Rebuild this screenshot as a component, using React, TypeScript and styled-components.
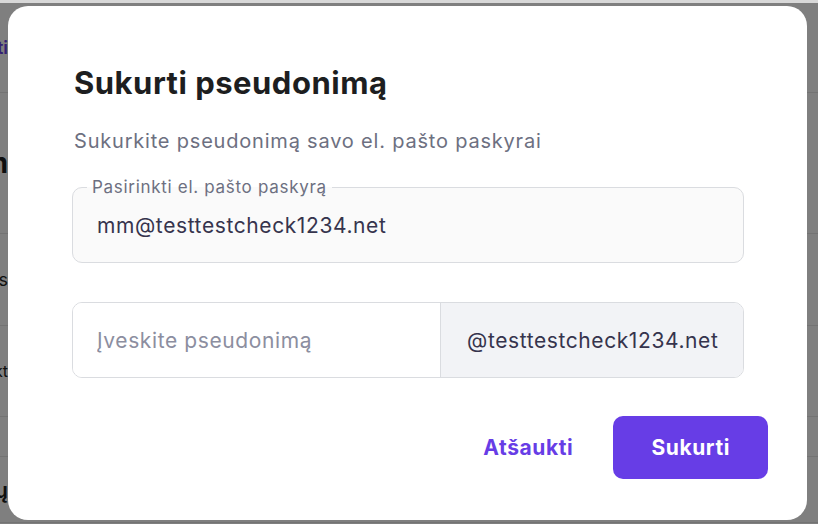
import React, { useState } from "react";
import styled, { createGlobalStyle } from "styled-components";

const GlobalStyle = createGlobalStyle`
  html, body {
    margin: 0;
    padding: 0;
    width: 100%;
    height: 100%;
    overflow: hidden;
  }
  body {
    font-family: "Inter", "Noto Sans", sans-serif;
    background: #ffffff;
  }
  * {
    box-sizing: border-box;
  }
`;

// background page, mostly hidden by the dialog
const Page = styled.div`
  width: 818px;
  height: 524px;
  position: relative;
  background: #ffffff;
  border-top: 3px solid #d8d8d8;
`;

const PageRow = styled.div<{ $height: number }>`
  height: ${({ $height }) => $height}px;
  border-bottom: 1px solid #e6e6e6;
  display: flex;
  align-items: center;
`;

const PageCell = styled.div`
  width: 8px;
  overflow: hidden;
  display: flex;
  justify-content: flex-end;
`;

const PageText = styled.span<{ $color?: string; $size: number; $weight?: number }>`
  white-space: nowrap;
  font-size: ${({ $size }) => $size}px;
  font-weight: ${({ $weight }) => $weight ?? 400};
  color: ${({ $color }) => $color ?? "#1d1e20"};
`;

const Overlay = styled.div`
  position: absolute;
  inset: 0;
  background: rgba(0, 0, 0, 0.5);
  display: flex;
  align-items: flex-start;
  padding: 3px 0 0 8px;
`;

const Dialog = styled.div`
  width: 799px;
  height: 514px;
  background: #ffffff;
  border-radius: 20px;
  padding: 58px 39px 41px 64px;
  display: flex;
  flex-direction: column;
`;

const Body = styled.div`
  padding-right: 24px;
  display: flex;
  flex-direction: column;
`;

const Title = styled.h2`
  margin: 0 0 0 2px;
  font-size: 31px;
  line-height: 38px;
  font-weight: 700;
  color: #1d1e20;
  letter-spacing: 0.5px;
`;

const Subtitle = styled.p`
  margin: 25px 0 0 2px;
  font-size: 20px;
  line-height: 28px;
  letter-spacing: 0.8px;
  color: #6d7081;
`;

const FieldBox = styled.div`
  position: relative;
  margin-top: 32px;
  height: 76px;
  padding: 0 24px;
  border: 1px solid #dadce0;
  border-radius: 10px;
  background: #fafafa;
  display: flex;
  align-items: center;
`;

const FloatingLabel = styled.label`
  position: absolute;
  top: -10px;
  left: 14px;
  padding: 0 5px;
  font-size: 17px;
  line-height: 18px;
  letter-spacing: 0.7px;
  color: #6d7081;
  background: linear-gradient(#ffffff 50%, #fafafa 50%);
`;

const FieldValue = styled.span`
  font-size: 21px;
  letter-spacing: 0.6px;
  color: #36344d;
`;

const Group = styled.div`
  margin-top: 39px;
  height: 76px;
  border: 1px solid #dadce0;
  border-radius: 10px;
  display: flex;
  overflow: hidden;
`;

const AliasInput = styled.input`
  flex: 1;
  min-width: 0;
  border: none;
  outline: none;
  padding: 0 24px;
  font-family: inherit;
  font-size: 21px;
  letter-spacing: 0.6px;
  color: #36344d;
  background: #ffffff;
  &::placeholder {
    color: #8c8ea0;
  }
`;

const Suffix = styled.div`
  width: 303px;
  border-left: 1px solid #dadce0;
  background: #f2f3f6;
  display: flex;
  align-items: center;
  padding-left: 26px;
  font-size: 21px;
  letter-spacing: 0.6px;
  color: #36344d;
`;

const Footer = styled.div`
  margin-top: 38px;
  display: flex;
  justify-content: flex-end;
  align-items: center;
  gap: 40px;
`;

const Button = styled.button<{ $primary?: boolean }>`
  height: 63px;
  padding: ${({ $primary }) => ($primary ? "0 38px" : "0")};
  border: none;
  border-radius: 10px;
  font-family: inherit;
  font-size: 21px;
  letter-spacing: 0.6px;
  font-weight: 700;
  cursor: pointer;
  background: ${({ $primary }) => ($primary ? "#673de6" : "transparent")};
  color: ${({ $primary }) => ($primary ? "#ffffff" : "#673de6")};
`;

const App = () => {
  const [alias, setAlias] = useState("");

  return (
    <>
      <GlobalStyle />
      <Page>
        <PageRow $height={90}>
          <PageCell>
            <PageText $size={18} $weight={600} $color="#673de6">
              Grįžti
            </PageText>
          </PageCell>
        </PageRow>
        <PageRow $height={141}>
          <PageCell>
            <PageText $size={28} $weight={700}>
              Pseudonim
            </PageText>
          </PageCell>
        </PageRow>
        <PageRow $height={92}>
          <PageCell>
            <PageText $size={18}>Pseudonimas</PageText>
          </PageCell>
        </PageRow>
        <PageRow $height={91}>
          <PageCell>
            <PageText $size={16}>kontakt</PageText>
          </PageCell>
        </PageRow>
        <PageRow $height={40}>
          <PageCell />
        </PageRow>
        <PageRow $height={66}>
          <PageCell>
            <PageText $size={22} $weight={600}>
              Nustatymų
            </PageText>
          </PageCell>
        </PageRow>
        <Overlay>
          <Dialog>
            <Body>
              <Title>Sukurti pseudonimą</Title>
              <Subtitle>Sukurkite pseudonimą savo el. pašto paskyrai</Subtitle>
              <FieldBox>
                <FloatingLabel>Pasirinkti el. pašto paskyrą</FloatingLabel>
                <FieldValue>mm@testtestcheck1234.net</FieldValue>
              </FieldBox>
              <Group>
                <AliasInput
                  value={alias}
                  onChange={(e) => setAlias(e.target.value)}
                  placeholder="Įveskite pseudonimą"
                />
                <Suffix>@testtestcheck1234.net</Suffix>
              </Group>
            </Body>
            <Footer>
              <Button>Atšaukti</Button>
              <Button $primary>Sukurti</Button>
            </Footer>
          </Dialog>
        </Overlay>
      </Page>
    </>
  );
};

export default App;
